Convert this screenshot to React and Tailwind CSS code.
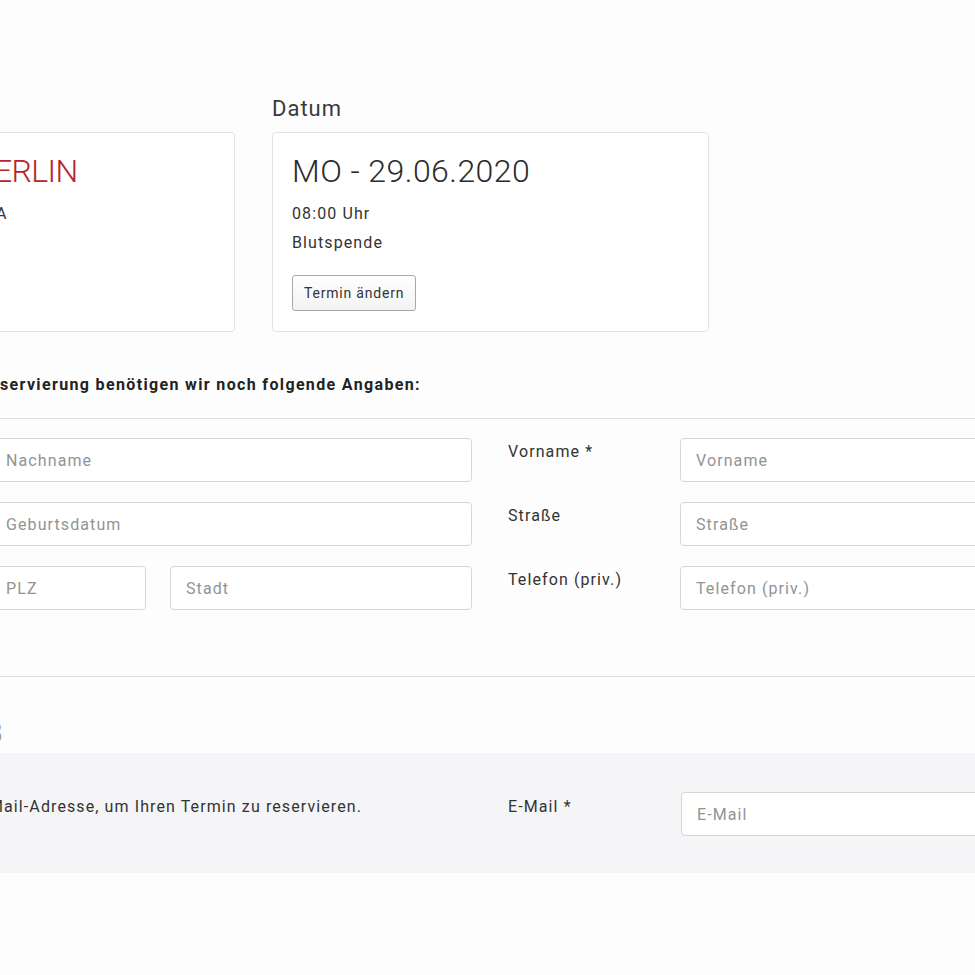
import React from "react";

function Field({ placeholder, className = "" }) {
  return (
    <input
      type="text"
      placeholder={placeholder}
      className={
        "h-[44px] rounded-[4px] border border-[#d6d6d6] bg-white pl-[15px] pr-3 text-[16px] tracking-[1.1px] text-[#333] outline-none placeholder:text-[#939393] " +
        className
      }
    />
  );
}

export default function App() {
  return (
    <div className="min-h-screen w-full overflow-hidden bg-[#fdfdfd] font-['Roboto','Liberation_Sans',sans-serif] text-[#333]">
      {/* Cards */}
      <div className="flex gap-[37px] pt-[96px] -ml-[202px]">
        <div className="w-[437px] shrink-0">
          <div className="mb-[10px] text-[22px] leading-[26px] tracking-[1px] text-[#3a3a3a]">Standort</div>
          <div className="h-[200px] rounded-[4px] border border-[#e2e2e2] bg-white p-[19px]">
            <div className="mb-[9px] flex whitespace-nowrap text-[32px] font-light leading-[38px] tracking-[-0.6px] text-[#b8232b]">
              <span className="w-[176px] shrink-0 text-right">B</span>
              <span>ERLIN</span>
            </div>
            <div className="flex whitespace-nowrap text-[16px] leading-[29px] tracking-[1.1px] text-[#333]">
              <span className="w-[178px] shrink-0 text-right">Halle&nbsp;</span>
              <span>A</span>
            </div>
          </div>
        </div>
        <div className="w-[437px] shrink-0">
          <div className="mb-[10px] text-[22px] leading-[26px] tracking-[1px] text-[#3a3a3a]">Datum</div>
          <div className="h-[200px] rounded-[4px] border border-[#e2e2e2] bg-white p-[19px]">
            <div className="mb-[9px] whitespace-nowrap text-[32px] font-light leading-[38px] tracking-[0.45px] text-[#2b2b2b]">
              MO - 29.06.2020
            </div>
            <div className="text-[16px] leading-[29px] tracking-[1.1px] text-[#333]">08:00 Uhr</div>
            <div className="text-[16px] leading-[29px] tracking-[1.1px] text-[#333]">Blutspende</div>
            <button className="mt-[18px] rounded-[3px] border border-[#a8a8a8] bg-gradient-to-b from-white to-[#f3f3f3] px-[11px] py-[7px] text-[14px] leading-[20px] tracking-[0.8px] text-[#333]">
              Termin ändern
            </button>
          </div>
        </div>
      </div>

      {/* Heading */}
      <div className="mt-[41px] flex whitespace-nowrap text-[16px] font-bold leading-[24px] tracking-[1.35px] text-[#222] -ml-[140px]">
        <span className="w-[140px] shrink-0 text-right">Für Ihre Re</span>
        <span>servierung benötigen wir noch folgende Angaben:</span>
      </div>
      <div className="mt-[21px] h-px w-full bg-[#dedede]" />

      {/* Form */}
      <div className="mt-[19px] flex flex-col gap-[20px] text-[16px] leading-[24px] tracking-[1.1px]">
        <div className="flex">
          <div className="-ml-[10px] flex w-[482px] shrink-0">
            <Field placeholder="Nachname" className="w-full" />
          </div>
          <div className="ml-[36px] w-[172px] shrink-0 pt-[2px]">Vorname *</div>
          <Field placeholder="Vorname" className="w-[344px] shrink-0" />
        </div>
        <div className="flex">
          <div className="-ml-[10px] flex w-[482px] shrink-0">
            <Field placeholder="Geburtsdatum" className="w-full" />
          </div>
          <div className="ml-[36px] w-[172px] shrink-0 pt-[2px]">Straße</div>
          <Field placeholder="Straße" className="w-[344px] shrink-0" />
        </div>
        <div className="flex">
          <div className="-ml-[10px] flex w-[482px] shrink-0 gap-[24px]">
            <Field placeholder="PLZ" className="w-[156px] shrink-0" />
            <Field placeholder="Stadt" className="w-[302px] shrink-0" />
          </div>
          <div className="ml-[36px] w-[172px] shrink-0 pt-[2px]">Telefon (priv.)</div>
          <Field placeholder="Telefon (priv.)" className="w-[344px] shrink-0" />
        </div>
      </div>

      <div className="mt-[66px] h-px w-full bg-[#dedede]" />

      {/* Step heading */}
      <div className="mt-[38px] mb-[2px] -ml-[200px] w-[203px] whitespace-nowrap text-right text-[30px] font-light leading-[36px] text-[#9a9a9a]">
        Schritt 3
      </div>

      {/* Email band */}
      <div className="flex h-[120px] bg-[#f5f5f7] pt-[39px] text-[16px] leading-[24px] tracking-[1.1px]">
        <div className="w-[508px] shrink-0 pt-[3px]">
          <p className="flex whitespace-nowrap text-[#333] -ml-[340px]">
            <span className="w-[329px] shrink-0 text-right">Bitte nennen Sie uns Ihre E-</span>
            <span>Mail-Adresse, um Ihren Termin zu reservieren.</span>
          </p>
        </div>
        <div className="w-[173px] shrink-0 pt-[3px]">E-Mail *</div>
        <Field placeholder="E-Mail" className="w-[344px] shrink-0" />
      </div>
    </div>
  );
}
